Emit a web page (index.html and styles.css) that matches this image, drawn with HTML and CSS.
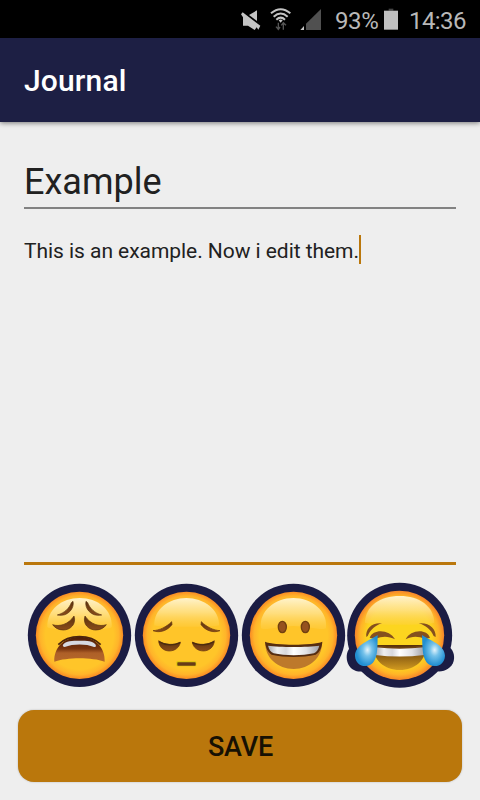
FILE: index.html
```html
<!DOCTYPE html>
<html lang="en">
<head>
<meta charset="utf-8">
<title>Journal</title>
<link rel="stylesheet" href="styles.css">
</head>
<body>
<div class="status">
  <svg class="status-icons" viewBox="0 0 300 114" aria-hidden="true">
    <g fill="#c4c4c4">
      <path d="M57 45L81 31V63Z"/>
      <path d="M33 43L38 37L91 77L85 89L80 82L74 90L54 77H39V52Z"/>
      <path d="M146 61L152 68L158 61Q152 56 146 61Z"/>
      <path d="M211 90L222 78V90Z"/>
    </g>
    <g fill="none" stroke="#c4c4c4" stroke-width="6">
      <path d="M123 40Q152 15 181 40"/>
      <path d="M131 50Q152 31 173 50"/>
      <path d="M139 59Q152 47 165 59"/>
    </g>
    <path d="M228 90V71L273 27V90Z" fill="#505050"/>
    <path d="M145 68V87M138 80L145 88L150 81M160 89V70M154 76L160 68L168 76" fill="none" stroke="#555" stroke-width="4"/>
  </svg>
  <span class="percent">93%</span>
  <svg class="battery" viewBox="0 0 42 66" aria-hidden="true"><path d="M14 2H28V8H14Z" fill="#444"/><path d="M0 8H42V65H0Z" fill="#c0c0c0"/></svg>
  <span class="clock">14:36</span>
</div>
<header class="bar"><h1>Journal</h1></header>
<main>
  <div class="title-field">Example</div>
  <div class="note-field"><span class="note">This is an example. Now i edit them.</span><span class="caret"></span></div>
  <div class="moods">
    <svg viewBox="18 81 321 321" role="img" aria-label="Weary">
      <defs>
        <radialGradient id="face"><stop offset=".78" stop-color="#ffc529"/><stop offset=".9" stop-color="#ffb42a"/><stop offset="1" stop-color="#f98b24"/></radialGradient>
        <linearGradient id="gloss" x2="0" y2="1"><stop stop-color="#fff3cc"/><stop offset=".5" stop-color="#ffe28a" stop-opacity=".85"/><stop offset="1" stop-color="#ffd04a" stop-opacity=".35"/></linearGradient>
        <linearGradient id="mouth" x2="0" y2="1"><stop stop-color="#4b1d08"/><stop offset=".48" stop-color="#7a3510"/><stop offset=".65" stop-color="#ae6028"/><stop offset="1" stop-color="#b5682a"/></linearGradient>
        <linearGradient id="lid" x2="0" y2="1"><stop stop-color="#5b320d"/><stop offset="1" stop-color="#8a4c1a"/></linearGradient>
        <linearGradient id="teeth"><stop stop-color="#a9a9ad"/><stop offset=".18" stop-color="#eeeeef"/><stop offset=".35" stop-color="#d8d8dc"/><stop offset=".5" stop-color="#fff"/><stop offset=".75" stop-color="#e1e1e4"/><stop offset="1" stop-color="#a0a0a5"/></linearGradient>
        <linearGradient id="smile" x2="0" y2="1"><stop stop-color="#573009"/><stop offset="1" stop-color="#d19a20"/></linearGradient>
        <radialGradient id="joyface"><stop offset=".72" stop-color="#fcd51f"/><stop offset=".88" stop-color="#ffb427"/><stop offset="1" stop-color="#f6842a"/></radialGradient>
        <radialGradient id="tear" cx=".55" cy=".48"><stop stop-color="#e4f4fc"/><stop offset=".4" stop-color="#75c2ea"/><stop offset="1" stop-color="#228fd2"/></radialGradient>
      </defs>
      <circle cx="178.500" cy="241" r="155" fill="#1b1c44"/>
      <circle cx="178.500" cy="241" r="131" fill="url(#face)"/>
      <path d="M82 216C80 164 125 129 179 129S278 164 275 216C270 228 87 228 82 216Z" fill="url(#gloss)"/>
      <g fill="url(#lid)" stroke="#57300f" stroke-width="2">
        <path d="M159 139C164 158 145 187 112 180C133 174 147 161 154 143Z"/>
        <path d="M198 139C193 158 212 187 245 180C224 174 210 161 203 143Z"/>
        <path d="M98 209C118 216 146 208 162 183C170 207 151 225 130 225C115 225 104 218 98 209Z"/>
        <path d="M259 209C239 216 211 208 195 183C187 207 206 225 227 225C242 225 253 218 259 209Z"/>
      </g>
      <path d="M103 320C101 278 132 246 179 246S256 278 254 320C217 306 140 306 103 320Z" fill="url(#mouth)"/>
      <path d="M129 269C137 257 157 257 179 257S219 257 227 269C229 275 226 277 222 276C198 266 160 266 134 276Q127 275 129 269Z" fill="#d6d9e2"/>
      <path d="M115 269C146 237 211 237 242 269" fill="none" stroke="#4b240c" stroke-width="5"/>
    </svg>
    <svg viewBox="9 21 321 321" role="img" aria-label="Pensive">
      <circle cx="169.500" cy="181" r="155" fill="#1b1c44"/>
      <circle cx="169.500" cy="181" r="131" fill="url(#face)"/>
      <path d="M73 151C70 104 117 69 169 69S269 104 267 151C260 157 80 157 73 151Z" fill="url(#gloss)"/>
      <g fill="url(#lid)" stroke="#67370f" stroke-width="2">
        <path d="M69 167C88 166 109 156 125 140L126 149C112 167 89 175 69 167Z"/>
        <path d="M270 167C251 166 230 156 214 140L213 149C227 167 250 175 270 167Z"/>
        <path d="M86 197C100 211 135 211 151 201C149 218 134 228 117 228C100 227 87 216 86 197Z"/>
        <path d="M253 197C239 211 204 211 187 201C189 218 204 228 221 228C238 227 252 216 253 197Z"/>
      </g>
      <path d="M87 200Q117 218 151 203M252 200Q221 218 187 203" fill="none" stroke="#4b2b0f" stroke-width="4"/>
      <rect x="139" y="259" width="60" height="15" rx="4" fill="#d8c50c"/>
      <rect x="142" y="262" width="55" height="10" rx="2" fill="#673b18"/>
    </svg>
    <svg viewBox="15 21 321 321" role="img" aria-label="Happy">
      <circle cx="175.500" cy="181" r="155" fill="#1b1c44"/>
      <circle cx="175.500" cy="181" r="131" fill="url(#face)"/>
      <path d="M78 158C72 109 120 69 175 69S279 109 273 158C268 170 218 153 175 153S83 170 78 158Z" fill="url(#gloss)"/>
      <g fill="#96521f" stroke="#71400f" stroke-width="4"><ellipse cx="142" cy="156" rx="12" ry="17"/><ellipse cx="211" cy="156" rx="12" ry="17"/></g>
      <path d="M91 202C113 213 239 213 261 202C262 248 224 282 176 282S89 248 91 202Z" fill="#bd792b"/>
      <path d="M90 200C115 212 237 212 262 200C261 218 253 233 242 239C201 248 151 248 110 239C99 232 92 218 90 200Z" fill="#562d10"/>
      <path d="M99 212C132 217 219 217 253 212C250 224 244 232 237 235C201 243 151 243 116 235C108 232 102 224 99 212Z" fill="url(#teeth)"/>
    </svg>
    <svg viewBox="21 81 321 321" role="img" aria-label="Tears of joy">
      <g fill="#1b1c44"><circle cx="179" cy="241" r="157.500"/><path d="M34 273C20 287 18 304 22 320C27 340 47 353 70 349L110 300Z"/><path d="M324 273C340 284 345 301 341 318C336 339 313 352 290 349L250 300Z"/></g>
      <circle cx="178.500" cy="241" r="134" fill="url(#joyface)"/>
      <path d="M75 203C76 153 120 123 179 123S281 153 283 203C260 211 98 211 75 203Z" fill="url(#gloss)"/>
      <g fill="#85501e">
        <path d="M79 246C75 221 98 201 126 205C106 211 91 224 83 243Z"/>
        <path d="M287 246C289 221 266 201 236 205C257 211 273 224 281 243Z"/>
        <path d="M89 248C100 220 149 223 165 253C147 244 128 242 107 252Z"/>
        <path d="M270 248C261 220 211 223 197 253C214 244 233 242 255 252Z"/>
      </g>
      <path d="M100 270H258C260 315 225 345 179 345S98 315 100 270Z" fill="url(#smile)"/>
      <path d="M103 270Q179 284 254 270L252 280Q179 290 105 280Z" fill="#6d4114"/>
      <path d="M105 277Q179 285 253 277V300Q179 309 105 300Z" fill="url(#teeth)"/>
      <path d="M113 240C90 256 45 270 45 302C46 324 62 334 77 333C116 331 112 278 113 240Z" fill="url(#tear)"/>
      <path d="M246 240C269 256 315 270 315 302C314 324 298 334 283 333C244 331 248 278 246 240Z" fill="url(#tear)"/>
    </svg>
  </div>
  <button class="save" type="button">SAVE</button>
</main>
</body>
</html>
```
FILE: styles.css
```css
* { box-sizing: border-box; }
body {
  margin: 0;
  width: 480px;
  height: 800px;
  overflow: hidden;
  background: #eee;
  color: #212121;
  font-family: Roboto, sans-serif;
}
.status {
  height: 38px;
  padding-left: 230px;
  display: flex;
  background: #000;
  color: #b8b8b8;
  font-size: 24px;
  line-height: 42px;
  white-space: nowrap;
}
.status-icons { width: 100px; height: 38px; }
.percent { width: 49px; padding-left: 5px; letter-spacing: -.4px; }
.battery { width: 14px; height: 22px; margin: 8px 0 0 5px; }
.clock { margin-left: 11px; letter-spacing: -.6px; }
.bar {
  height: 84px;
  padding: 2px 0 0 24px;
  display: flex;
  align-items: center;
  background: #1d1f44;
  color: #fff;
  box-shadow: 0 1px 5px rgba(0, 0, 0, .5);
}
h1 { margin: 0; font-size: 30px; font-weight: 500; line-height: 36px; letter-spacing: .15px; }
main { display: flex; flex-direction: column; padding: 38px 18px 0; }
.title-field {
  height: 49px;
  margin: 0 6px;
  border-bottom: 2px solid #828282;
  font-size: 36px;
  line-height: 44px;
}
.note-field {
  height: 356px;
  margin: 0 6px;
  padding-top: 26px;
  display: flex;
  border-bottom: 3px solid #ba770c;
  font-size: 21px;
  line-height: 33px;
  letter-spacing: -.05px;
}
.caret { width: 2px; height: 29px; background: #ba770c; }
.moods { display: flex; height: 107px; margin: 17px 8px 21px; }
.moods svg { width: 107px; height: 107px; flex: none; overflow: visible; }
.save {
  height: 72px;
  padding: 2px 0 0 1px;
  border: 0;
  border-radius: 16px;
  background: #ba770c;
  color: #171103;
  font: 500 27px/70px Roboto, sans-serif;
  letter-spacing: -.2px;
  box-shadow: 0 0 2px rgba(0, 0, 0, .25);
}
```
